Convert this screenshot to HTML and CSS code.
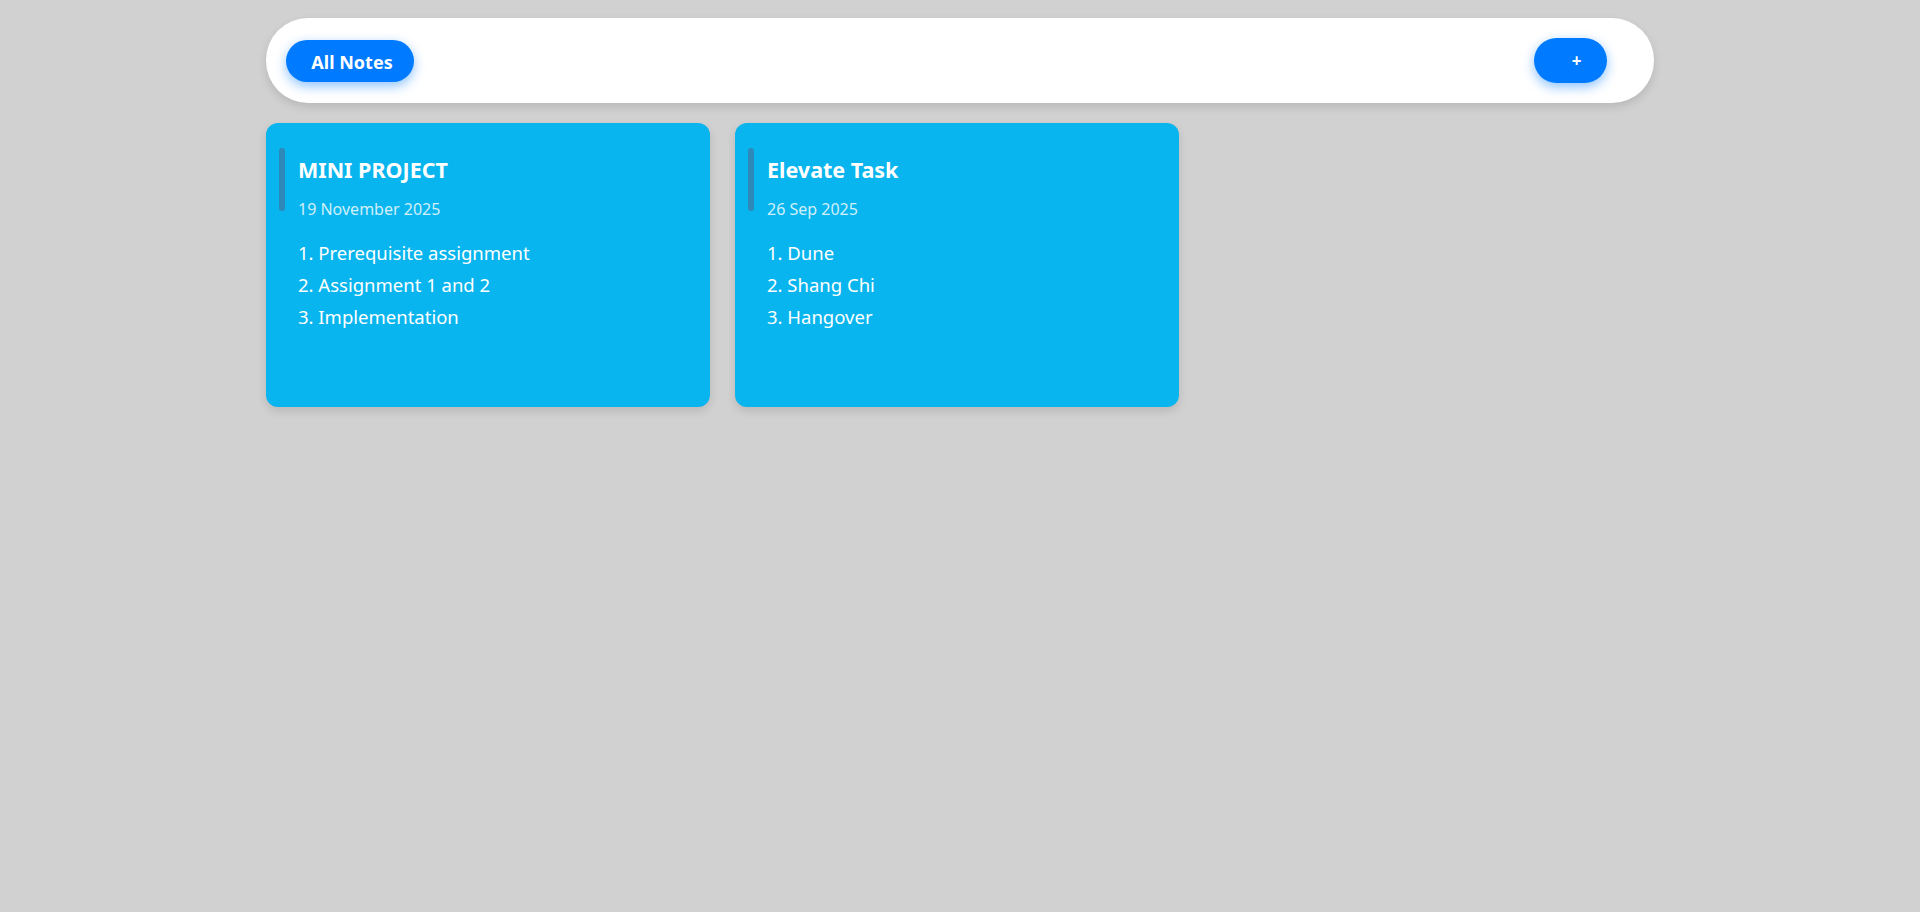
FILE: index.html
```html
<!DOCTYPE html>
<html lang="en">
<head>
<meta charset="utf-8">
<title>Notes</title>
<link rel="stylesheet" href="styles.css">
</head>
<body>
<div class="page">
  <header class="topbar">
    <button class="btn btn-all">All Notes</button>
    <button class="btn btn-add">+</button>
  </header>
  <main class="notes">
    <article class="note">
      <div class="note-head">
        <span class="note-bar"></span>
        <div class="note-titles">
          <h2 class="note-title">MINI PROJECT</h2>
          <div class="note-date">19 November 2025</div>
        </div>
      </div>
      <div class="note-body">
        <div>1. Prerequisite assignment</div>
        <div>2. Assignment 1 and 2</div>
        <div>3. Implementation</div>
      </div>
    </article>
    <article class="note">
      <div class="note-head">
        <span class="note-bar"></span>
        <div class="note-titles">
          <h2 class="note-title">Elevate Task</h2>
          <div class="note-date">26 Sep 2025</div>
        </div>
      </div>
      <div class="note-body">
        <div>1. Dune</div>
        <div>2. Shang Chi</div>
        <div>3. Hangover</div>
      </div>
    </article>
  </main>
</div>
</body>
</html>
```
FILE: styles.css
```css
* { box-sizing: border-box; }
html, body { margin: 0; padding: 0; }
body {
  background: #d0d1d0;
  font-family: "Segoe UI", "Noto Sans", "Open Sans", sans-serif;
  color: #fff;
  min-height: 912px;
}
.page {
  width: 1388px;
  margin: 18px auto 0;
}
.topbar {
  height: 85px;
  background: #fff;
  border-radius: 42px;
  display: flex;
  align-items: center;
  justify-content: space-between;
  padding: 0 47px 0 20px;
  box-shadow: 0 4px 10px rgba(0,0,0,0.12);
}
.btn {
  border: none;
  background: #007bff;
  color: #fff;
  font-family: inherit;
  font-weight: 700;
  cursor: pointer;
  box-shadow: 0 4px 12px rgba(0,123,255,0.45);
}
.btn-all {
  width: 128px;
  height: 42px;
  border-radius: 21px;
  font-size: 18px;
  padding: 2px 0 0 4px;
  margin-top: 1px;
}
.btn-add {
  width: 73px;
  height: 45px;
  border-radius: 23px;
  font-size: 17px;
  padding: 0 0 0 12px;
}
.notes {
  margin-top: 20px;
  display: grid;
  grid-template-columns: repeat(3, 444px);
  gap: 25px;
}
.note {
  height: 284px;
  background: #08b5ee;
  border-radius: 12px;
  padding: 25px 32px 0 13px;
  box-shadow: 0 4px 10px rgba(0,0,0,0.12);
}
.note-head {
  display: flex;
  gap: 13px;
}
.note-bar {
  flex: none;
  width: 6px;
  height: 63px;
  border-radius: 3px;
  background: #2e88b8;
}
.note-title {
  margin: 7px 0 0;
  font-size: 21.5px;
  line-height: 30px;
  font-weight: 700;
}
.note-date {
  margin-top: 13px;
  font-size: 16px;
  line-height: 22px;
  color: rgba(255,255,255,0.82);
}
.note-body {
  margin: 17px 0 0 19px;
  font-size: 18.5px;
  line-height: 32px;
}
```
